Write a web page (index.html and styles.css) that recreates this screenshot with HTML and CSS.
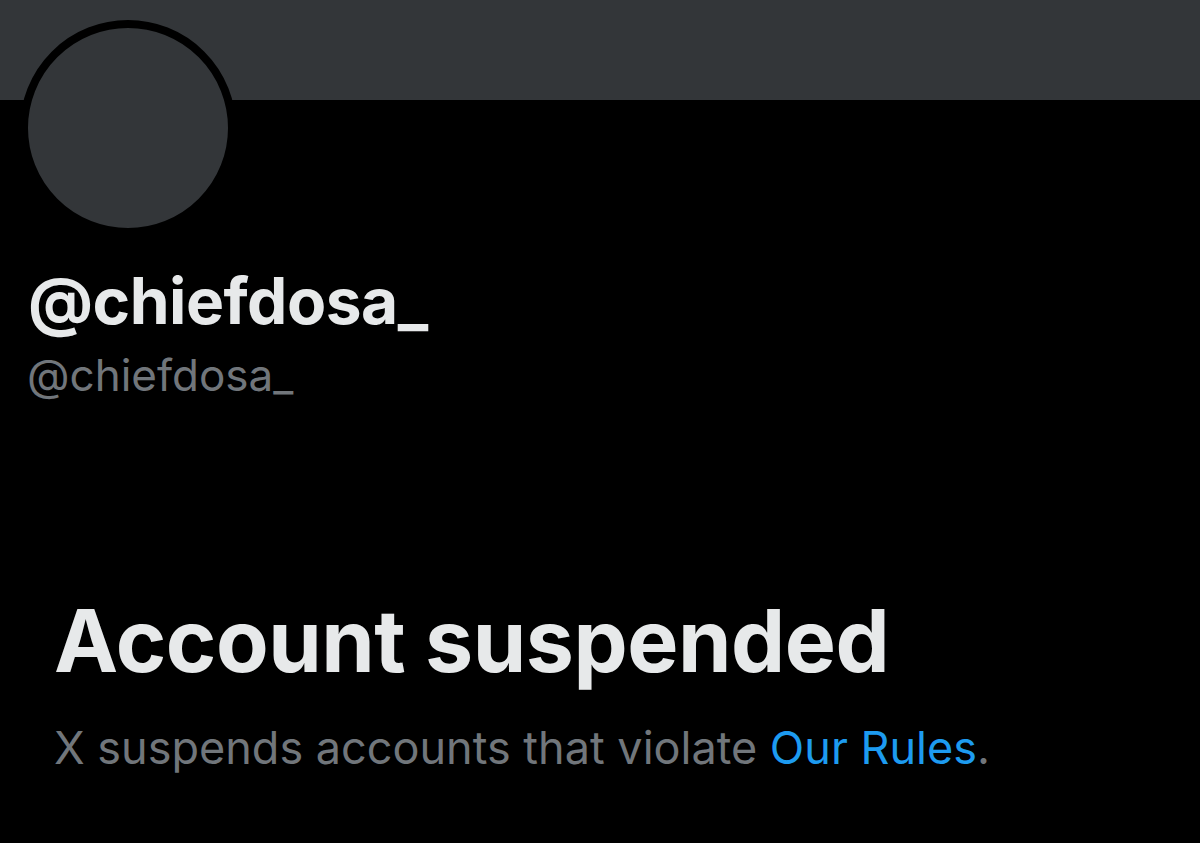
FILE: index.html
```html
<html>
<head>
    <title>@chiefdosa_ / X</title>
    <link rel="stylesheet" href="styles.css">
</head>
<body>
    <div class="banner"></div>
    <div class="profile">
        <div class="avatar"></div>
        <div class="name">@chiefdosa_</div>
        <div class="handle">@chiefdosa_</div>
    </div>
    <div class="notice">
        <h1 class="notice-title">Account suspended</h1>
        <p class="notice-text">X suspends accounts that violate <a href="#">Our Rules</a>.</p>
    </div>
</body>
</html>
```

FILE: styles.css
```css
body {
    margin: 0;
    background-color: #000;
    font-family: "Inter", "Liberation Sans", sans-serif;
    overflow: hidden;
}

.banner {
    height: 100px;
    background-color: #333639;
}

.profile {
    padding-left: 20px;
}

.avatar {
    width: 200px;
    height: 200px;
    margin-top: -80px;
    border: 8px solid #000;
    border-radius: 50%;
    background-color: #333639;
}

.name {
    margin-top: 27px;
    padding-left: 8px;
    color: #e7e9ea;
    font-size: 64px;
    line-height: 76px;
    font-weight: 700;
    letter-spacing: -0.5px;
}

.handle {
    margin-top: 10px;
    padding-left: 7px;
    color: #71767b;
    font-size: 44px;
    line-height: 52px;
}

.notice {
    padding-left: 54px;
    margin-top: 190px;
}

.notice-title {
    margin: 0;
    color: #e7e9ea;
    font-size: 86px;
    line-height: 100px;
    font-weight: 700;
    letter-spacing: -0.5px;
}

.notice-text {
    margin: 31px 0 0 0;
    color: #71767b;
    font-size: 45px;
    line-height: 52px;
}

.notice-text a {
    color: #1d9bf0;
    text-decoration: none;
}
```
